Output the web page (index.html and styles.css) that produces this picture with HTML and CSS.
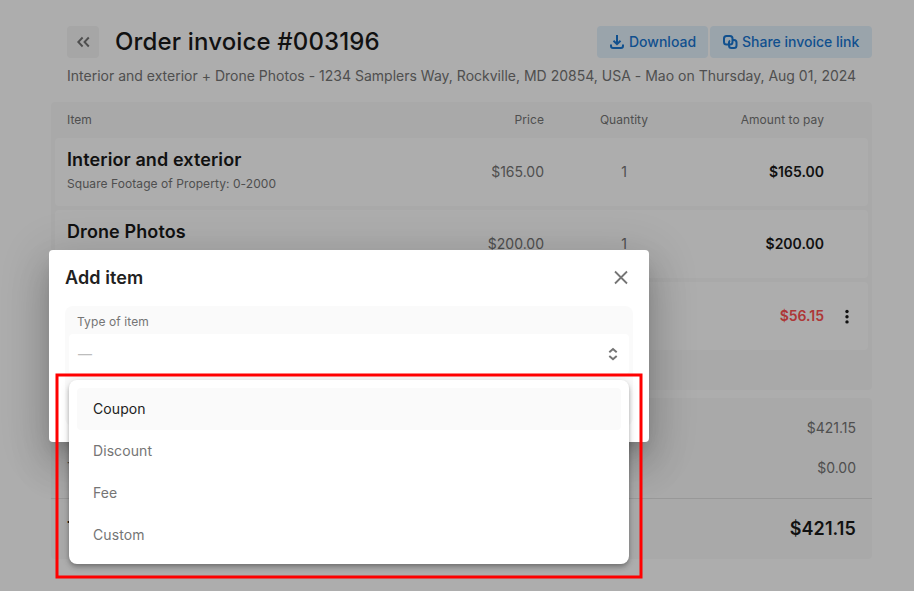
FILE: index.html
```
<!DOCTYPE html>
<html lang="en">
<head>
<meta charset="utf-8">
<title>Order invoice #003196</title>
<link rel="stylesheet" href="styles.css">
</head>
<body>
<main class="page">
  <header class="head">
    <button class="back" aria-label="Back"><svg width="16" height="16" viewBox="0 0 16 16"><path d="M7.600 3.500 3.300 8l4.300 4.500M13.800 3.500 9.500 8l4.300 4.500"/></svg></button>
    <h1 class="title">Order invoice #003196</h1>
    <div class="actions">
      <button class="action download"><svg width="16" height="16" viewBox="0 0 16 16"><path d="M8 1v9M4.500 6.800 8 10.200l3.500-3.400M2 10.500v1.500q0 2 2 2h8q2 0 2-2v-1.500"/></svg><span>Download</span></button>
      <button class="action share"><svg width="16" height="16" viewBox="0 0 16 16"><path d="M6.500 10.500H4.500Q2 10.500 2 8V4.500Q2 2 4.500 2H8Q10.500 2 10.500 4.500V8Q10.500 10.500 8 10.500M11.500 6H12Q14.500 6 14.500 8.500V11.500Q14.500 14 12 14H9.500Q7 14 7 11.500V8.500Q7 7.200 8 6.500"/></svg><span>Share invoice link</span></button>
    </div>
  </header>
  <p class="summary">Interior and exterior + Drone Photos - 1234 Samplers Way, Rockville, MD 20854, USA - Mao on Thursday, Aug 01, 2024</p>

  <section class="items">
    <div class="cols labels"><span>Item</span><span class="num">Price</span><span class="qty">Quantity</span><span class="num">Amount to pay</span></div>
    <div class="cols row">
      <div class="item"><h2 class="name">Interior and exterior</h2><p class="note">Square Footage of Property: 0-2000</p></div>
      <span class="num">$165.00</span><span class="qty">1</span><span class="num amount">$165.00</span>
    </div>
    <div class="cols row">
      <div class="item"><h2 class="name">Drone Photos</h2><p class="note">&nbsp;</p></div>
      <span class="num">$200.00</span><span class="qty">1</span><span class="num amount">$200.00</span>
    </div>
    <div class="cols row">
      <div></div><span></span><span></span><span class="num amount off">$56.15</span>
      <svg class="more" width="16" height="16" viewBox="0 0 16 16"><circle cx="8" cy="3.500" r="1.700"/><circle cx="8" cy="8.700" r="1.700"/><circle cx="8" cy="13.900" r="1.700"/></svg>
    </div>
  </section>

  <section class="totals">
    <div class="line"><span></span><span>$421.15</span></div>
    <div class="line"><span>T</span><span>$0.00</span></div>
    <div class="line grand"><span>T</span><span>$421.15</span></div>
  </section>
</main>

<div class="overlay">
  <div class="dialog">
    <div class="dialog-head"><h2 class="dialog-title">Add item</h2><svg width="16" height="16" viewBox="0 0 16 16"><path d="m2 1.500 12 12M14 1.500 2 13.500"/></svg></div>
    <div class="field">
      <label class="label">Type of item</label>
      <div class="select"><span>—</span><svg width="16" height="16" viewBox="0 0 16 16"><path d="M4.300 6.200 8 3l3.700 3.200M4.300 10 8 13.200l3.700-3.200"/></svg></div>
    </div>
  </div>
  <ul class="menu"><li class="option active">Coupon</li><li class="option">Discount</li><li class="option">Fee</li><li class="option">Custom</li></ul>
  <svg class="marker" width="588" height="206" viewBox="0 0 588 206"><rect x="2" y="2" width="584" height="202"/></svg>
</div>
</body>
</html>
```
FILE: styles.css
```
* { box-sizing: border-box; margin: 0; padding: 0; }
body { width: 914px; height: 591px; overflow: hidden; background: #fff; color: #757575; font-family: Inter, "Liberation Sans", sans-serif; font-size: 14px; line-height: 20px; letter-spacing: 0; }
button { border: 0; font: inherit; letter-spacing: inherit; }
svg { flex: none; fill: none; stroke: currentColor; stroke-width: 2; }
.page { width: 821px; margin-left: 51px; padding-top: 26px; }
.head { display: flex; align-items: center; height: 32px; padding-left: 16px; }
.back { display: grid; place-items: center; width: 32px; height: 32px; border-radius: 4px; background: #f5f5f5; color: #757575; }
.back svg { stroke-width: 1.900; }
.title { margin-left: 16px; color: #1a1a1a; font-size: 24px; font-weight: 500; line-height: 32px; letter-spacing: .15px; }
.actions { display: flex; gap: 2px; margin-left: auto; }
.action { display: flex; align-items: center; gap: 4px; height: 32px; padding-left: 12px; border-radius: 4px; background: #e3f2fd; color: #1976d2; font-weight: 500; }
.download { width: 111px; }
.share { width: 162px; }
.summary { margin: 8px 0 16px 16px; white-space: nowrap; letter-spacing: .005px; }
.items { height: 288px; padding: 0 4px; border-radius: 4px; background: #fafafa; }
.cols { display: grid; grid-template-columns: 380px 97px 160px 120px 1fr; align-items: center; padding-left: 12px; }
.labels { height: 36px; font-size: 12px; line-height: 16px; letter-spacing: .05px; }
.row { height: 68px; margin-bottom: 4px; border-radius: 4px; background: #fff; }
.num { text-align: right; white-space: nowrap; }
.qty { text-align: center; white-space: nowrap; }
.item { padding-bottom: 4px; }
.name { color: #1a1a1a; font-size: 18px; font-weight: 600; line-height: 24px; letter-spacing: .1px; }
.note { margin-top: 4px; font-size: 12px; line-height: 16px; letter-spacing: .07px; }
.amount { color: #1a1a1a; font-weight: 600; }
.off { color: #ff5252; }
.more { margin-left: 15px; color: #1a1a1a; fill: currentColor; stroke: none; }
.totals { height: 161px; margin-top: 8px; padding-top: 10px; border-radius: 4px; background: #fafafa; }
.line { display: flex; align-items: center; justify-content: space-between; height: 40px; padding: 0 16px; }
.grand { height: 61px; margin-top: 10px; border-top: 1px solid #e0e0e0; color: #1a1a1a; font-size: 18px; font-weight: 600; letter-spacing: .1px; }
.overlay { position: absolute; inset: 0; background: rgba(0,0,0,.32); }
.dialog { position: absolute; left: 49px; top: 250px; width: 600px; height: 192px; padding: 16px; border-radius: 4px; background: #fff; box-shadow: 0 11px 15px -7px rgba(0,0,0,.2), 0 24px 38px 3px rgba(0,0,0,.14), 0 9px 46px 8px rgba(0,0,0,.12); }
.dialog-head { display: flex; align-items: center; justify-content: space-between; height: 24px; padding-right: 4px; }
.dialog-head svg { stroke-width: 1.800; }
.dialog-title { color: #212121; font-size: 18px; font-weight: 600; line-height: 24px; letter-spacing: .1px; }
.field { height: 120px; margin-top: 16px; padding: 8px 4px; border-radius: 8px; background: #fafafa; }
.label { display: block; height: 20px; padding-left: 8px; font-size: 12px; line-height: 16px; letter-spacing: .1px; }
.select { display: flex; align-items: center; justify-content: space-between; height: 40px; padding: 0 8px 0 9px; border-radius: 4px; background: #fff; color: #757575; }
.select span { color: #bdbdbd; }
.menu { position: absolute; left: 69px; top: 380px; width: 560px; height: 184px; padding: 8px; list-style: none; border-radius: 8px; background: #fff; box-shadow: 0 2px 4px -1px rgba(0,0,0,.2), 0 4px 5px rgba(0,0,0,.14), 0 1px 10px rgba(0,0,0,.12); }
.option { height: 42px; padding: 11px 16px; border-radius: 4px; letter-spacing: .08px; }
.active { background: #fafafa; color: #212121; }
.marker { position: absolute; left: 55px; top: 373px; stroke: #f00; stroke-width: 3; }
```
